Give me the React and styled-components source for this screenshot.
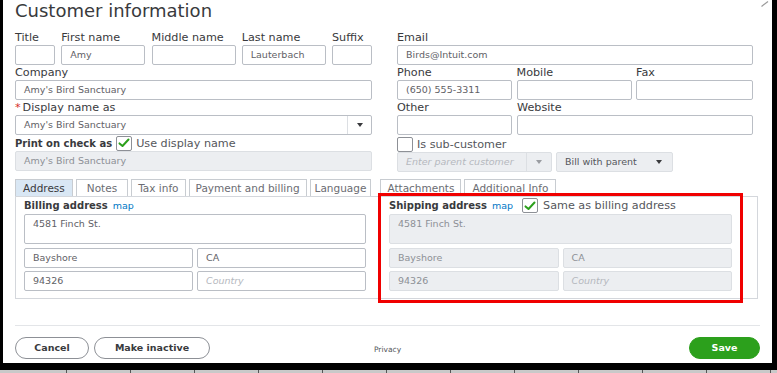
import React from "react";
import styled, { createGlobalStyle, css } from "styled-components";

const GlobalStyle = createGlobalStyle`
  html, body { margin: 0; padding: 0; background: #000; }
  body { font-family: "DejaVu Sans", "Liberation Sans", sans-serif; color: #393a3d; }
  * { box-sizing: border-box; }
`;

const Screen = styled.div`
  width: 777px;
  height: 373px;
  display: flex;
  flex-direction: column;
  overflow: hidden;
`;

const Dialog = styled.div`
  position: relative;
  margin-left: 3px;
  width: 769px;
  height: 363px;
  background: #fff;
  padding: 0 12px;
  display: flex;
  flex-direction: column;
`;

const CloseMark = styled.svg`
  position: absolute;
  top: 1px;
  right: 3px;
`;

const Heading = styled.h1`
  margin: 0 0 8px;
  font-size: 18px;
  line-height: 22px;
  font-weight: 400;
  color: #393a3d;
`;

const TopGrid = styled.div`
  display: grid;
  grid-template-columns: 357px 356px;
  column-gap: 25px;
`;

const Column = styled.div`
  display: flex;
  flex-direction: column;
`;

const Row = styled.div`
  display: grid;
  grid-template-columns: ${(p) => p.$cols};
  justify-content: ${(p) => p.$justify || "space-between"};
  column-gap: ${(p) => p.$gap || "4px"};
`;

const FieldWrap = styled.div`
  display: flex;
  flex-direction: column;
`;

const Label = styled.div`
  height: 15px;
  line-height: 15px;
  font-size: 11.2px;
  color: #393a3d;
  white-space: nowrap;
`;

const Required = styled.span`
  color: #d52b1e;
  margin-right: 2px;
`;

const Box = styled.div`
  height: ${(p) => p.$h || 20}px;
  border: 1px solid ${(p) => (p.$disabled ? "#dcdfe3" : "#babec5")};
  border-radius: 2px;
  background: ${(p) => (p.$disabled ? "#eceef1" : "#fff")};
  padding: ${(p) => (p.$multi ? "3px 8px" : "0 8px")};
  font-size: 9.5px;
  line-height: ${(p) => (p.$multi ? "12px" : "18px")};
  color: ${(p) => (p.$disabled ? "#8d9096" : "#5f6166")};
  white-space: nowrap;
  overflow: hidden;
  ${(p) =>
    p.$placeholder &&
    css`
      color: #b5b8be;
      font-style: italic;
    `}
`;

const SelectBox = styled.div`
  height: 20px;
  display: grid;
  grid-template-columns: 1fr ${(p) => p.$btn || 24}px;
  border: 1px solid ${(p) => (p.$disabled ? "#dcdfe3" : "#babec5")};
  border-radius: 2px;
  background: ${(p) => (p.$disabled ? "#eceef1" : "#fff")};
  font-size: 9.5px;
  line-height: 18px;
  color: ${(p) => (p.$disabled ? "#8d9096" : "#5f6166")};
`;

const SelectText = styled.div`
  padding: 0 8px;
  white-space: nowrap;
  overflow: hidden;
  ${(p) =>
    p.$placeholder &&
    css`
      color: #b5b8be;
      font-style: italic;
    `}
  ${(p) =>
    p.$dark &&
    css`
      color: #55575c;
    `}
`;

const SelectBtn = styled.div`
  display: flex;
  align-items: center;
  justify-content: center;
  border-left: 1px solid ${(p) => (p.$divider ? "#dcdfe3" : "transparent")};
`;

const Caret = styled.span`
  width: 0;
  height: 0;
  border-left: 3.5px solid transparent;
  border-right: 3.5px solid transparent;
  border-top: 4px solid ${(p) => p.$color || "#393a3d"};
`;

const CheckRow = styled.div`
  height: ${(p) => p.$h || 16}px;
  display: flex;
  align-items: center;
  gap: 4px;
  font-size: 11.2px;
  color: #393a3d;
  white-space: nowrap;
`;

const LightText = styled.span`
  color: #55575c;
`;

const BoldText = styled.span`
  font-weight: 700;
  font-size: 10px;
  color: #393a3d;
`;

const CheckBoxEl = styled.span`
  width: 16px;
  height: 15px;
  border: 1px solid #8d9096;
  border-radius: 2px;
  background: #fff;
  display: inline-flex;
  align-items: center;
  justify-content: center;
  flex: none;
`;

const CheckBox = ({ checked }) => (
  <CheckBoxEl>
    {checked && (
      <svg width="12" height="10" viewBox="0 0 12 10">
        <path d="M1.5 5.4 L4.5 8 L10.5 1.5" fill="none" stroke="#2ca01c" strokeWidth="2" strokeLinecap="round" strokeLinejoin="round" />
      </svg>
    )}
  </CheckBoxEl>
);

const Spacer = styled.div`
  height: ${(p) => p.$h}px;
`;

const TabBar = styled.div`
  margin-top: 7px;
  height: 17px;
  display: flex;
  gap: 3px;
`;

const Tab = styled.div`
  height: 17px;
  padding: 0 ${(p) => p.$pad || 7}px;
  border: 1px solid #c8ccd1;
  border-bottom: none;
  background: ${(p) => (p.$active ? "#d9e7f4" : "#fff")};
  font-size: 10.5px;
  line-height: 17px;
  color: ${(p) => (p.$active ? "#393a3d" : "#6b6c72")};
  white-space: nowrap;
  margin-left: ${(p) => p.$gapBefore || 0}px;
`;

const Panel = styled.div`
  position: relative;
  width: 743px;
  height: 103px;
  border: 1px solid #d4d7dc;
  padding: 0 25px 0 8px;
  display: grid;
  grid-template-columns: 342px 343px;
  column-gap: 23px;
`;

const Section = styled.div`
  display: flex;
  flex-direction: column;
`;

const SectionHead = styled.div`
  height: 17px;
  display: flex;
  align-items: center;
  gap: 5px;
  font-size: 11.2px;
  white-space: nowrap;
`;

const MapLink = styled.span`
  color: #0077c5;
  font-size: 9.5px;
  margin-right: 4px;
`;

const AddrGrid = styled.div`
  display: grid;
  grid-template-columns: 1fr 1fr;
  gap: 3px 4px;
  margin-top: 4px;
`;

const Highlight = styled.div`
  position: absolute;
  left: 362px;
  top: -4px;
  width: 365px;
  height: 110px;
  border: 3px solid #f00000;
  pointer-events: none;
`;

const Footer = styled.div`
  margin-top: 26px;
  border-top: 1px solid #e3e5e8;
  padding-top: 11px;
  display: grid;
  grid-template-columns: 1fr auto 1fr;
  align-items: center;
`;

const ButtonGroup = styled.div`
  display: flex;
  gap: 5px;
  justify-self: ${(p) => (p.$end ? "end" : "start")};
`;

const Pill = styled.div`
  height: 22px;
  width: ${(p) => p.$w}px;
  border-radius: 11px;
  border: 1px solid ${(p) => (p.$primary ? "#2ca01c" : "#8d9096")};
  background: ${(p) => (p.$primary ? "#2ca01c" : "#fff")};
  color: ${(p) => (p.$primary ? "#fff" : "#393a3d")};
  font-size: 9.5px;
  font-weight: 700;
  line-height: 20px;
  text-align: center;
`;

const Privacy = styled.div`
  font-size: 7.5px;
  color: #55575c;
  padding-top: 2px;
`;

const Strip = styled.div`
  margin-top: 7px;
  height: 3px;
  background: repeating-linear-gradient(90deg, #c9c9c9 0 63px, #555 63px 64px);
  background-position: 3px 0;
`;

const Field = ({ label, value, disabled, placeholder, required }) => (
  <FieldWrap>
    <Label>
      {required && <Required>*</Required>}
      {label}
    </Label>
    <Box $disabled={disabled} $placeholder={placeholder}>{value}</Box>
  </FieldWrap>
);

export default function App() {
  return (
    <>
      <GlobalStyle />
      <Screen>
        <Dialog>
          <CloseMark width="8" height="6" viewBox="0 0 8 6">
            <path d="M0.5 5.5 L7 0.5" stroke="#9a9a9a" strokeWidth="1.2" />
          </CloseMark>
          <Heading>Customer information</Heading>
          <TopGrid>
            <Column>
              <Row $cols="40px 84px 84px 84px 40px" $gap="0px">
                <Field label="Title" value="" />
                <Field label="First name" value="Amy" />
                <Field label="Middle name" value="" />
                <Field label="Last name" value="Lauterbach" />
                <Field label="Suffix" value="" />
              </Row>
              <Field label="Company" value="Amy's Bird Sanctuary" />
              <FieldWrap>
                <Label>
                  <Required>*</Required>Display name as
                </Label>
                <SelectBox $btn={24}>
                  <SelectText>Amy's Bird Sanctuary</SelectText>
                  <SelectBtn $divider>
                    <Caret />
                  </SelectBtn>
                </SelectBox>
              </FieldWrap>
              <CheckRow $h={16}>
                <BoldText>Print on check as</BoldText>
                <CheckBox checked />
                <LightText>Use display name</LightText>
              </CheckRow>
              <Box $disabled>Amy's Bird Sanctuary</Box>
            </Column>
            <Column>
              <Field label="Email" value="Birds@Intuit.com" />
              <Row $cols="115px 115px 117px">
                <Field label="Phone" value="(650) 555-3311" />
                <Field label="Mobile" value="" />
                <Field label="Fax" value="" />
              </Row>
              <Row $cols="115px 236px">
                <Field label="Other" value="" />
                <Field label="Website" value="" />
              </Row>
              <Spacer $h={2} />
              <CheckRow $h={15}>
                <CheckBox />
                <LightText>Is sub-customer</LightText>
              </CheckRow>
              <Row $cols="155px 117px" $justify="start">
                <SelectBox $disabled $btn={25}>
                  <SelectText $placeholder>Enter parent customer</SelectText>
                  <SelectBtn $divider>
                    <Caret $color="#9a9ca1" />
                  </SelectBtn>
                </SelectBox>
                <SelectBox $disabled $btn={28}>
                  <SelectText $dark>Bill with parent</SelectText>
                  <SelectBtn>
                    <Caret />
                  </SelectBtn>
                </SelectBox>
              </Row>
            </Column>
          </TopGrid>
          <TabBar>
            <Tab $active>Address</Tab>
            <Tab $pad={10}>Notes</Tab>
            <Tab $pad={6}>Tax info</Tab>
            <Tab $pad={6}>Payment and billing</Tab>
            <Tab $pad={4}>Language</Tab>
            <Tab $gapBefore={6} $pad={6}>Attachments</Tab>
            <Tab $pad={7}>Additional Info</Tab>
          </TabBar>
          <Panel>
            <Section>
              <SectionHead>
                <BoldText>Billing address</BoldText>
                <MapLink>map</MapLink>
              </SectionHead>
              <Box $h={30} $multi>4581 Finch St.</Box>
              <AddrGrid>
                <Box>Bayshore</Box>
                <Box>CA</Box>
                <Box>94326</Box>
                <Box $placeholder>Country</Box>
              </AddrGrid>
            </Section>
            <Section>
              <SectionHead>
                <BoldText>Shipping address</BoldText>
                <MapLink>map</MapLink>
                <CheckBox checked />
                <LightText>Same as billing address</LightText>
              </SectionHead>
              <Box $h={30} $multi $disabled>4581 Finch St.</Box>
              <AddrGrid>
                <Box $disabled>Bayshore</Box>
                <Box $disabled>CA</Box>
                <Box $disabled>94326</Box>
                <Box $disabled $placeholder>Country</Box>
              </AddrGrid>
            </Section>
            <Highlight />
          </Panel>
          <Footer>
            <ButtonGroup>
              <Pill $w={74}>Cancel</Pill>
              <Pill $w={116}>Make inactive</Pill>
            </ButtonGroup>
            <Privacy>Privacy</Privacy>
            <ButtonGroup $end>
              <Pill $w={71} $primary>Save</Pill>
            </ButtonGroup>
          </Footer>
        </Dialog>
        <Strip />
      </Screen>
    </>
  );
}
